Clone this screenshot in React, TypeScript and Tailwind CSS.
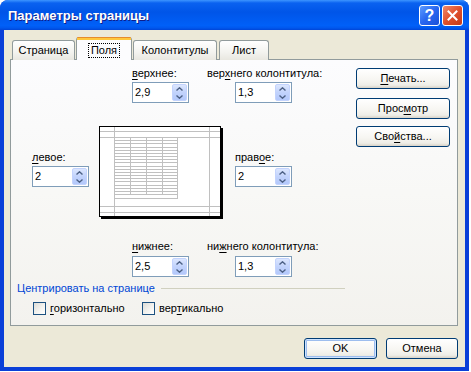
import type { ReactNode } from 'react';
import clsx from 'clsx';

// ── small pieces ──────────────────────────────────────────────────────────

const U = ({ children }: { children: ReactNode }) => (
  <span className="underline decoration-1 underline-offset-[2px]">{children}</span>
);

function Spin({ value }: { value: string }) {
  return (
    <div className="flex h-[21px] w-[57px] items-center border border-[#7F9DB9] bg-white pl-[2px] pr-[1px]">
      <span className="flex-1 leading-none">{value}</span>
      <div className="flex h-[17px] w-[15px] flex-col items-center justify-center gap-[4px] rounded-[2px] border border-[#C3D3FD] bg-[linear-gradient(180deg,#DCE6FE_0%,#C2D3FC_50%,#B3C8FB_100%)]">
        <svg width="7" height="4" viewBox="0 0 7 4">
          <polyline points="0.5,3.5 3.5,0.8 6.5,3.5" fill="none" stroke="#4D6185" strokeWidth="1.4" />
        </svg>
        <svg width="7" height="4" viewBox="0 0 7 4">
          <polyline points="0.5,0.5 3.5,3.2 6.5,0.5" fill="none" stroke="#4D6185" strokeWidth="1.4" />
        </svg>
      </div>
    </div>
  );
}

function Btn({ children, className, def }: { children: ReactNode; className?: string; def?: boolean }) {
  return (
    <div
      className={clsx(
        'flex h-[21px] items-center justify-center rounded-[3px] border border-[#003C74] bg-[linear-gradient(180deg,#FFFFFF_0%,#F7F6F2_55%,#EEEDE7_85%,#D8D2C7_100%)]',
        def && 'shadow-[inset_0_0_0_1px_#CEE3FF,inset_0_0_0_2px_#9DBDEE]',
        className,
      )}
    >
      {children}
    </div>
  );
}

function Check({ children }: { children: ReactNode }) {
  return (
    <div className="flex items-center gap-[4px]">
      <div className="h-[13px] w-[13px] border border-[#1C5180] bg-[linear-gradient(135deg,#DCDCD7_0%,#F4F4F1_60%,#FFFFFF_100%)]" />
      <span>{children}</span>
    </div>
  );
}

// page preview drawing
function Preview() {
  const rows = Array.from({ length: 18 }, (_, k) => Math.round(10 + (k + 1) * 3.17));
  const cols = [30, 46, 62];
  return (
    <div className="h-[91px] w-[122px] shrink-0 border border-black bg-white shadow-[2px_2px_0_0_#000]">
      <svg width="120" height="89" viewBox="0 0 120 89" shapeRendering="crispEdges">
        <g stroke="#C0C0C0" strokeWidth="1">
          {[4, 10, 79, 85].map(y => (
            <line key={'h' + y} x1="0" x2="120" y1={y + 0.5} y2={y + 0.5} />
          ))}
          {[14, 109].map(x => (
            <line key={'v' + x} x1={x + 0.5} x2={x + 0.5} y1="0" y2="89" />
          ))}
          {rows.map(y => (
            <line key={'r' + y} x1="14" x2="78" y1={y + 0.5} y2={y + 0.5} />
          ))}
          <line x1="14" x2="78" y1="71.5" y2="71.5" />
          {cols.map(x => (
            <line key={'c' + x} x1={x + 0.5} x2={x + 0.5} y1="10" y2="68" />
          ))}
          <line x1="77.5" x2="77.5" y1="10" y2="72" />
        </g>
      </svg>
    </div>
  );
}

// ── dialog ────────────────────────────────────────────────────────────────

export default function App() {
  return (
    <div className="h-[372px] w-[471px] bg-white text-[11px] leading-[13px] text-black [font-family:'Liberation_Sans',Arial,sans-serif]">
      <div className="flex h-[371px] w-[469px] flex-col rounded-t-[8px] bg-[#0A3FD8]">
        {/* Title bar */}
        <div className="flex h-[30px] shrink-0 items-center rounded-t-[8px] bg-[linear-gradient(180deg,#3D95FF_0%,#0A62F0_10%,#0055E8_40%,#0060F8_85%,#0058EE_93%,#0045D8_100%)] pl-[8px] pr-[6px]">
          <span className="flex-1 text-[13px] font-bold text-white [text-shadow:1px_1px_0_#0F1E8A]">
            Параметры страницы
          </span>
          <div className="flex h-[21px] w-[21px] items-center justify-center rounded-[3px] border border-white bg-[linear-gradient(135deg,#5C9BFF_0%,#2866F0_50%,#1B50D8_100%)] text-[16px] font-bold text-white">
            ?
          </div>
          <div className="ml-[2px] flex h-[21px] w-[21px] items-center justify-center rounded-[3px] border border-white bg-[linear-gradient(135deg,#F08A6C_0%,#E0502C_50%,#C63A18_100%)]">
            <svg width="11" height="11" viewBox="0 0 11 11">
              <path d="M1.5 1.5 L9.5 9.5 M9.5 1.5 L1.5 9.5" stroke="white" strokeWidth="2" strokeLinecap="square" />
            </svg>
          </div>
        </div>

        {/* Client area */}
        <div className="mx-[4px] mb-[4px] flex flex-1 flex-col bg-[#ECE9D8] pt-[8px]">
          <div className="ml-[6px] mr-[7px]">
            {/* Tabs */}
            <div className="relative z-10 -mb-px flex h-[22px] items-end pl-[2px]">
              <div className="flex h-[20px] w-[63px] items-center justify-center rounded-t-[3px] border border-b-0 border-[#919B9C] bg-[linear-gradient(180deg,#FFFFFF_0%,#F3F3EF_60%,#E8E7E0_100%)]">
                Страница
              </div>
              <div className="ml-px flex h-[23px] w-[56px] flex-col rounded-t-[3px] border-x border-[#919B9C] bg-[#FCFCFE]">
                <div className="h-px rounded-t-[3px] bg-[#E68B2C]" />
                <div className="h-[2px] bg-[#FFC73C]" />
                <div className="flex flex-1 items-center justify-center">
                  <span className="px-[2px] outline outline-1 outline-dotted outline-black">Поля</span>
                </div>
              </div>
              <div className="ml-px flex h-[20px] w-[84px] items-center justify-center rounded-t-[3px] border border-b-0 border-[#919B9C] bg-[linear-gradient(180deg,#FFFFFF_0%,#F3F3EF_60%,#E8E7E0_100%)]">
                Колонтитулы
              </div>
              <div className="ml-[2px] flex h-[20px] w-[50px] items-center justify-center rounded-t-[3px] border border-b-0 border-[#919B9C] bg-[linear-gradient(180deg,#FFFFFF_0%,#F3F3EF_60%,#E8E7E0_100%)]">
                Лист
              </div>
            </div>

            {/* Tab panel */}
            <div className="flex h-[267px] border border-[#919B9C] bg-[linear-gradient(180deg,#FCFCFE_0%,#F8F8F6_50%,#F3F2EE_100%)]">
              <div className="flex w-[335px] flex-col pt-[7px]">
                {/* top margins */}
                <div className="ml-[121px] flex">
                  <div className="w-[75px]">
                    <div><U>в</U>ерхнее:</div>
                    <div className="mt-[2px]"><Spin value="2,9" /></div>
                  </div>
                  <div>
                    <div>вер<U>х</U>него колонтитула:</div>
                    <div className="ml-[28px] mt-[2px]"><Spin value="1,3" /></div>
                  </div>
                </div>

                {/* left / preview / right */}
                <div className="mt-[23px] flex items-start">
                  <div className="ml-[21px] w-[67px] pt-[25px]">
                    <div><U>л</U>евое:</div>
                    <div className="mt-[2px]"><Spin value="2" /></div>
                  </div>
                  <Preview />
                  <div className="ml-[14px] pt-[25px]">
                    <div>прав<U>о</U>е:</div>
                    <div className="mt-[2px]"><Spin value="2" /></div>
                  </div>
                </div>

                {/* bottom margins */}
                <div className="ml-[121px] mt-[23px] flex">
                  <div className="w-[75px]">
                    <div><U>н</U>ижнее:</div>
                    <div className="mt-[3px]"><Spin value="2,5" /></div>
                  </div>
                  <div>
                    <div>ни<U>ж</U>него колонтитула:</div>
                    <div className="ml-[28px] mt-[3px]"><Spin value="1,3" /></div>
                  </div>
                </div>

                {/* center on page */}
                <div className="ml-[6px] mr-px mt-[5px] flex items-center">
                  <span className="text-[#0046D5]">Центрировать на странице</span>
                  <div className="ml-[6px] h-px flex-1 bg-[#D0D0BF]" />
                </div>
                <div className="ml-[22px] mt-[7px] flex items-center">
                  <div className="w-[109px]">
                    <Check><U>г</U>оризонтально</Check>
                  </div>
                  <Check>вер<U>т</U>икально</Check>
                </div>
              </div>

              {/* side buttons */}
              <div className="ml-[10px] flex w-[94px] flex-col pt-[8px]">
                <Btn><U>П</U>ечать...</Btn>
                <Btn className="mt-[9px]">Прос<U>м</U>отр</Btn>
                <Btn className="mt-[7px]">Сво<U>й</U>ства...</Btn>
              </div>
            </div>

            {/* OK / Cancel */}
            <div className="mt-[12px] flex justify-end gap-[9px]">
              <Btn def className="w-[73px]">OK</Btn>
              <Btn className="w-[72px]">Отмена</Btn>
            </div>
          </div>
        </div>
      </div>
    </div>
  );
}
